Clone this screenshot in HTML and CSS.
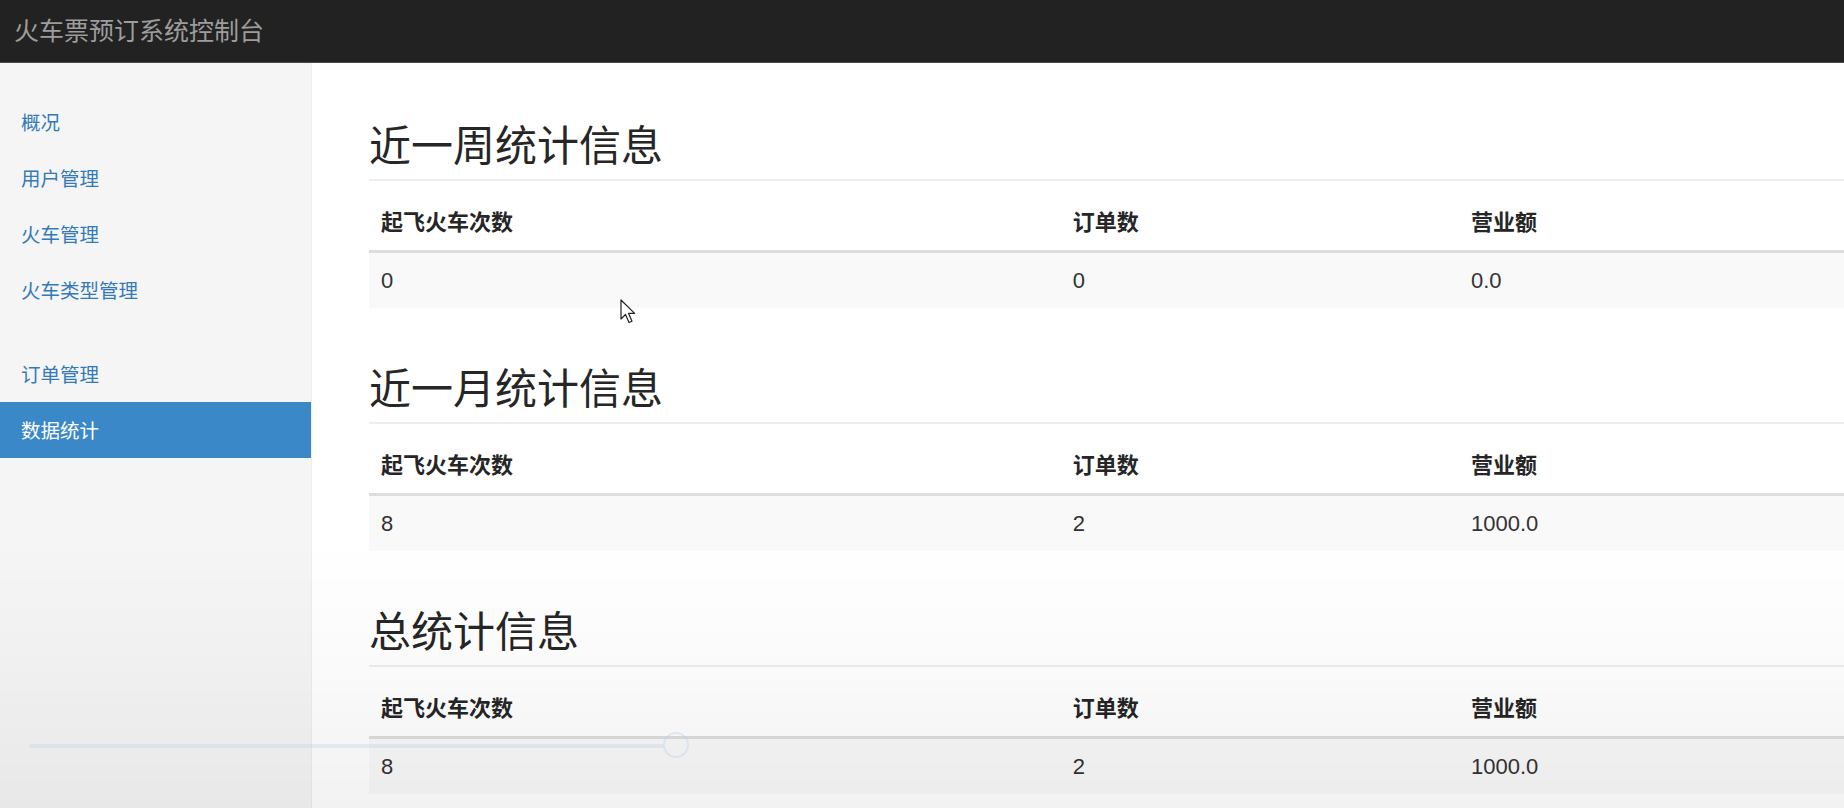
FILE: index.html
```html
<!DOCTYPE html>
<html lang="zh-CN">
<head>
<meta charset="utf-8">
<title>火车票预订系统控制台</title>
<link rel="stylesheet" href="styles.css">
</head>
<body>
<header class="navbar">
  <a class="brand" href="#">火车票预订系统控制台</a>
</header>
<div class="layout">
  <aside class="sidebar">
    <ul class="nav">
      <li><a href="#">概况</a></li>
      <li><a href="#">用户管理</a></li>
      <li><a href="#">火车管理</a></li>
      <li><a href="#">火车类型管理</a></li>
    </ul>
    <ul class="nav">
      <li><a href="#">订单管理</a></li>
      <li class="active"><a href="#">数据统计</a></li>
    </ul>
  </aside>
  <main class="main">
    <h2 class="page-header first">近一周统计信息</h2>
    <table class="table">
      <colgroup><col class="c1"><col class="c2"><col class="c3"></colgroup>
      <thead><tr><th>起飞火车次数</th><th>订单数</th><th>营业额</th></tr></thead>
      <tbody><tr><td>0</td><td>0</td><td>0.0</td></tr></tbody>
    </table>
    <h2 class="page-header">近一月统计信息</h2>
    <table class="table">
      <colgroup><col class="c1"><col class="c2"><col class="c3"></colgroup>
      <thead><tr><th>起飞火车次数</th><th>订单数</th><th>营业额</th></tr></thead>
      <tbody><tr><td>8</td><td>2</td><td>1000.0</td></tr></tbody>
    </table>
    <h2 class="page-header">总统计信息</h2>
    <table class="table">
      <colgroup><col class="c1"><col class="c2"><col class="c3"></colgroup>
      <thead><tr><th>起飞火车次数</th><th>订单数</th><th>营业额</th></tr></thead>
      <tbody><tr><td>8</td><td>2</td><td>1000.0</td></tr></tbody>
    </table>
  </main>
</div>
<div class="player-fade"></div>
<div class="player-track"></div>
<div class="player-knob"></div>
<svg class="cursor" width="16" height="26" viewBox="0 0 16 26">
  <path d="M1 1 L1 20 L5.5 15.5 L9 23.5 L12 22.2 L8.6 14.4 L14.6 14.4 Z" fill="#ffffff" stroke="#222222" stroke-width="1.2" stroke-linejoin="round"/>
</svg>
</body>
</html>
```

FILE: styles.css
```css
html, body {
  margin: 0;
  padding: 0;
  height: 100%;
  overflow: hidden;
}

body {
  font-family: "Liberation Sans", "Noto Sans CJK SC", sans-serif;
  color: #333333;
  background: #ffffff;
}

.navbar {
  height: 62px;
  background: #222222;
  border-bottom: 1px solid #4a4a4a;
  display: flex;
  align-items: center;
}

.brand {
  padding-left: 14px;
  padding-bottom: 4px;
  font-family: "Noto Sans CJK SC", sans-serif;
  font-size: 25px;
  color: #9d9d9d;
  text-decoration: none;
}

.layout {
  display: flex;
  height: calc(100% - 63px);
}

.sidebar {
  width: 311px;
  flex: 0 0 311px;
  background: #f5f5f5;
  border-right: 1px solid #eeeeee;
  padding-top: 31px;
}

.nav {
  list-style: none;
  margin: 0 0 28px 0;
  padding: 0;
}

.nav li a {
  display: block;
  padding: 14px 21px;
  line-height: 28px;
  font-family: "Noto Sans CJK SC", sans-serif;
  font-size: 19.5px;
  color: #337ab7;
  text-decoration: none;
}

.nav li.active a {
  background: #3b88c9;
  color: #ffffff;
}

.main {
  flex: 1;
  padding-left: 57px;
  min-width: 0;
}

.page-header {
  margin: 55px 0 14px 0;
  padding-bottom: 13px;
  border-bottom: 2px solid #eeeeee;
  font-family: "Noto Sans CJK SC", sans-serif;
  font-weight: 400;
  font-size: 42px;
  line-height: 46px;
  color: #262626;
}

.page-header.first {
  margin-top: 57px;
}

.table {
  width: 100%;
  border-collapse: collapse;
  border-spacing: 0;
  margin: 0;
  font-size: 22px;
}

.table col.c1 { width: 46.9%; }
.table col.c2 { width: 27%; }

.table th,
.table td {
  padding: 11px 12px;
  line-height: 33px;
  text-align: left;
}

.table th {
  font-weight: 700;
  color: #262626;
  border-bottom: 3px solid #dddddd;
  vertical-align: bottom;
}

.table td {
  border-top: 1px solid #dddddd;
  background: #f9f9f9;
  color: #333333;
  vertical-align: top;
}

.player-fade {
  position: fixed;
  left: 0;
  right: 0;
  top: 540px;
  bottom: 0;
  pointer-events: none;
  background: linear-gradient(to bottom, rgba(0,0,0,0) 0%, rgba(0,0,0,0.015) 40%, rgba(0,0,0,0.05) 100%);
}

.player-track {
  position: fixed;
  left: 29px;
  top: 744px;
  width: 635px;
  height: 4px;
  border-radius: 2px;
  background: rgba(170, 195, 225, 0.25);
  pointer-events: none;
}

.player-knob {
  position: fixed;
  left: 663px;
  top: 732px;
  width: 26px;
  height: 26px;
  border-radius: 50%;
  border: 2px solid rgba(190, 210, 235, 0.45);
  box-sizing: border-box;
  pointer-events: none;
}

.cursor {
  position: fixed;
  left: 620px;
  top: 299px;
  pointer-events: none;
}
```
